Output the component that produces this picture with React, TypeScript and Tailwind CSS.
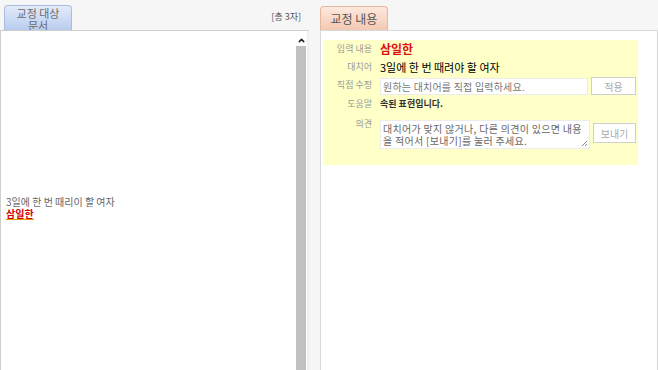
import { ChevronUp } from 'lucide-react'

const font = { fontFamily: '"Noto Sans CJK KR", "Noto Sans", sans-serif' }

type RowProps = {
  label: string
  children: React.ReactNode
  className?: string
  labelClass?: string
}

function Row({ label, children, className = '', labelClass = 'leading-[16px]' }: RowProps) {
  return (
    <div className={`flex gap-2 ${className}`}>
      <span className={`w-[49px] shrink-0 text-right text-[9px] text-[#9a9a9a] ${labelClass}`}>
        {label}
      </span>
      <div className="flex min-w-0 flex-1 items-center gap-[3px]">{children}</div>
    </div>
  )
}

function LeftPanel() {
  return (
    <section className="flex w-[309px] shrink-0 flex-col">
      <div className="flex h-[30px] items-end justify-between pl-1 pr-2">
        <div className="flex h-[25px] w-[68px] flex-col items-center justify-center rounded-t-[4px] border border-b-0 border-[#a9bde0] bg-gradient-to-b from-[#e3ebf9] to-[#b9ccef] pt-[2px] text-[11px] leading-[12px] text-[#6b6b6b]">
          <span>교정 대상</span>
          <span>문서</span>
        </div>
        <span className="mb-[7px] text-[9px] text-[#555]">[총 3자]</span>
      </div>
      <div className="flex min-h-0 flex-1 border-t border-l border-[#cfcfcf] bg-white">
        <div className="flex flex-1 flex-col justify-center pl-[5px] pt-[14px]">
          <p className="text-[10px] leading-[12px] text-[#666]">3일에 한 번 때리이 할 여자</p>
          <p className="w-fit border-b border-[#e0a000] text-[10px] font-bold leading-[11px] text-[#d40000]">
            삼일한
          </p>
        </div>
        <div className="mt-[3px] flex w-[12px] flex-col items-center">
          <div className="flex h-[12px] w-full items-center justify-center">
            <ChevronUp size={9} strokeWidth={4} className="text-[#222]" />
          </div>
          <div className="w-[10px] flex-1 bg-[#c0c0c0]" />
        </div>
        <div className="w-[2px] bg-[#efefef]" />
      </div>
    </section>
  )
}

function RightPanel() {
  return (
    <section className="flex flex-1 flex-col">
      <div className="flex h-[30px] items-end">
        <div className="flex h-[24px] w-[68px] items-center justify-center rounded-t-[4px] border border-b-0 border-[#e5b79f] bg-gradient-to-b from-[#fde9de] to-[#f4c8b2] text-[12px] text-[#555]">
          교정 내용
        </div>
      </div>
      <div className="flex-1 border-t border-l border-r border-[#d8d8d8] bg-white pt-[9px] pl-[2px] pr-[19px]">
        <div className="flex flex-col bg-[#ffffc8] pt-[1px] pb-[16px] pr-[2px]">
          <Row label="입력 내용">
            <span className="text-[12px] font-bold leading-[16px] text-[#e01010]">삼일한</span>
          </Row>
          <Row label="대치어" className="mt-[2px]">
            <span className="text-[11px] leading-[16px] text-black">3일에 한 번 때려야 할 여자</span>
          </Row>
          <Row label="직접 수정" className="mt-[2px]">
            <div className="flex h-[17px] flex-1 items-center border border-[#ececec] bg-white px-[2px] text-[10px] tracking-[0.2px] text-[#777]">
              원하는 대치어를 직접 입력하세요.
            </div>
            <button className="h-[18px] w-[45px] border border-[#cfcfcf] bg-white text-[10px] text-[#aaa]">
              적용
            </button>
          </Row>
          <Row label="도움말" className="mt-[1px]">
            <span className="text-[9px] font-bold leading-[16px] text-[#333]">속된 표현입니다.</span>
          </Row>
          <Row label="의견" className="mt-[8px] items-start" labelClass="-mt-[4px] leading-[16px]">
            <div className="relative h-[29px] flex-1 border border-[#ececec] bg-white px-[2px] pt-[2px] text-[10px] leading-[12px] tracking-[0.3px] text-[#666]">
              대치어가 맞지 않거나, 다른 의견이 있으면 내용을 적어서 [보내기]를 눌러 주세요.
              <svg
                viewBox="0 0 8 8"
                className="absolute right-[1px] bottom-[1px] h-[8px] w-[8px]"
              >
                <path d="M7 2 L2 7 M7 5 L5 7" stroke="#888" strokeWidth="1" />
              </svg>
            </div>
            <button className="mt-[3px] h-[20px] w-[43px] self-start border border-[#cfcfcf] bg-white text-[10px] text-[#aaa]">
              보내기
            </button>
          </Row>
        </div>
      </div>
    </section>
  )
}

export default function App() {
  return (
    <div
      className="flex h-[370px] w-[658px] gap-[11px] overflow-hidden bg-[#f6f6f6]"
      style={font}
    >
      <LeftPanel />
      <RightPanel />
    </div>
  )
}
